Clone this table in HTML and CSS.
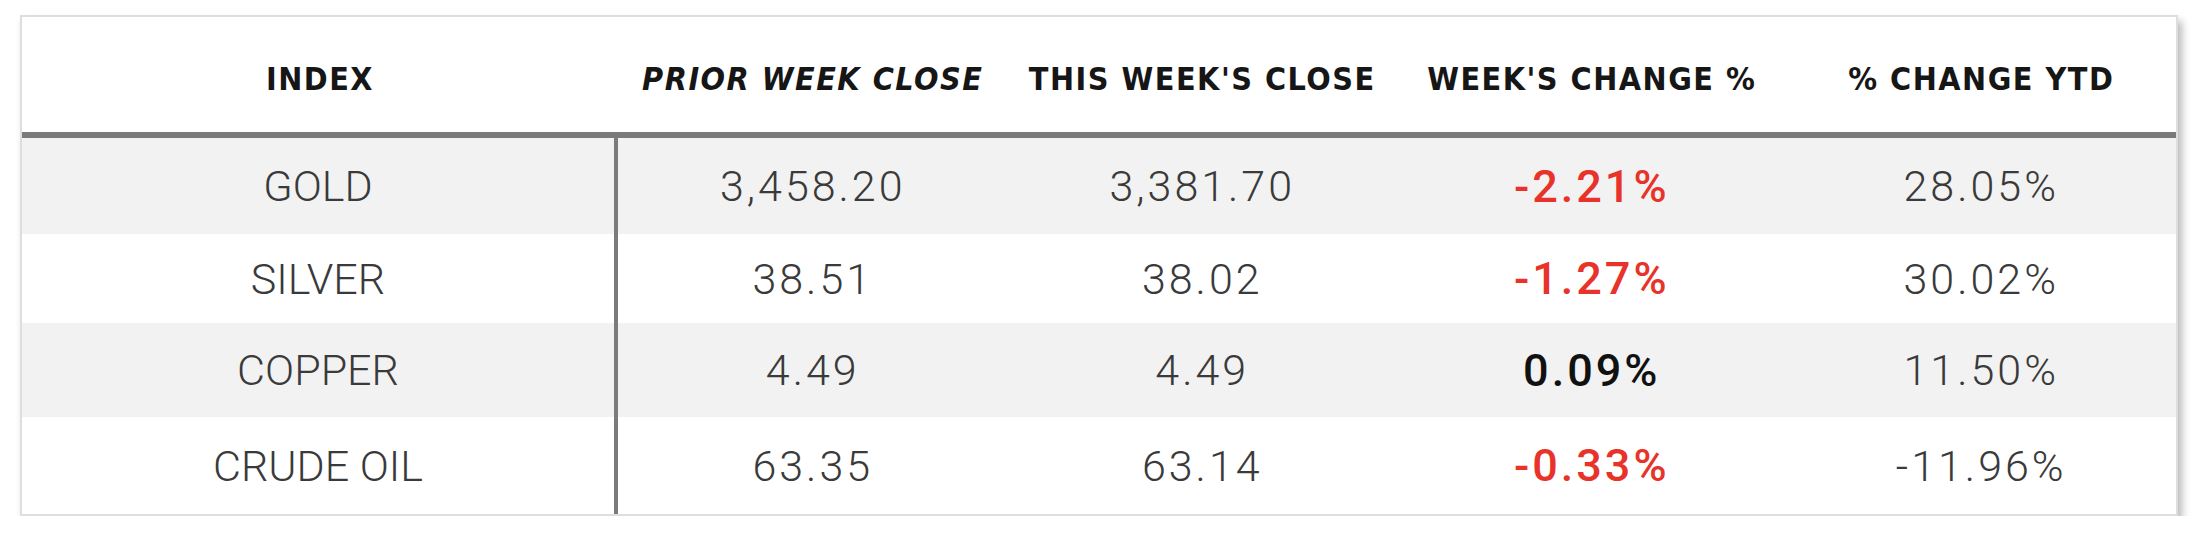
FILE: index.html
```html
<!DOCTYPE html>
<html>
<head>
<meta charset="utf-8">
<link rel="stylesheet" href="styles.css">
</head>
<body>
<div class="card">
  <div class="grid">
    <div class="th">INDEX</div>
    <div class="th italic">PRIOR WEEK CLOSE</div>
    <div class="th">THIS WEEK'S CLOSE</div>
    <div class="th">WEEK'S CHANGE %</div>
    <div class="th">% CHANGE YTD</div>

    <div class="td name shade">GOLD</div>
    <div class="td num shade">3,458.20</div>
    <div class="td num shade">3,381.70</div>
    <div class="td num shade neg">-2.21%</div>
    <div class="td num shade">28.05%</div>

    <div class="td name">SILVER</div>
    <div class="td num">38.51</div>
    <div class="td num">38.02</div>
    <div class="td num neg">-1.27%</div>
    <div class="td num">30.02%</div>

    <div class="td name shade">COPPER</div>
    <div class="td num shade">4.49</div>
    <div class="td num shade">4.49</div>
    <div class="td num shade pos">0.09%</div>
    <div class="td num shade">11.50%</div>

    <div class="td name">CRUDE OIL</div>
    <div class="td num">63.35</div>
    <div class="td num">63.14</div>
    <div class="td num neg">-0.33%</div>
    <div class="td num">-11.96%</div>
  </div>
</div>
</body>
</html>
```

FILE: styles.css
```css
html, body {
  margin: 0;
  padding: 0;
  background: #ffffff;
}
body {
  padding: 15px 0 0 20px;
}
.card {
  width: 2158px;
  height: 501px;
  box-sizing: border-box;
  border: 2px solid #dedede;
  background: #ffffff;
  box-shadow: 4px 6px 8px rgba(0, 0, 0, 0.28);
}
.grid {
  display: grid;
  grid-template-columns: 596px repeat(4, 1fr);
  grid-template-rows: 121px 96px 89px 94px 97px;
}
.th {
  display: flex;
  align-items: center;
  justify-content: center;
  box-sizing: border-box;
  border-bottom: 6px solid #7a7a7a;
  padding-top: 8px;
  font-family: "DejaVu Sans Condensed", "DejaVu Sans", sans-serif;
  font-stretch: condensed;
  font-weight: 700;
  font-size: 32px;
  letter-spacing: 1.5px;
  color: #161616;
}
.italic {
  font-style: italic;
}
.td {
  display: flex;
  align-items: center;
  justify-content: center;
  box-sizing: border-box;
  font-family: Roboto, "Liberation Sans", sans-serif;
  font-weight: 300;
  font-size: 43px;
  color: #3a3a3a;
}
.shade {
  background: #f2f2f2;
}
.name {
  border-right: 4px solid #7b7b7b;
}
.num {
  letter-spacing: 3px;
}
.neg {
  color: #e8332a;
  font-weight: 500;
  font-size: 45px;
  letter-spacing: 3px;
}
.pos {
  color: #111111;
  font-weight: 500;
  font-size: 45px;
  letter-spacing: 3px;
}
```
